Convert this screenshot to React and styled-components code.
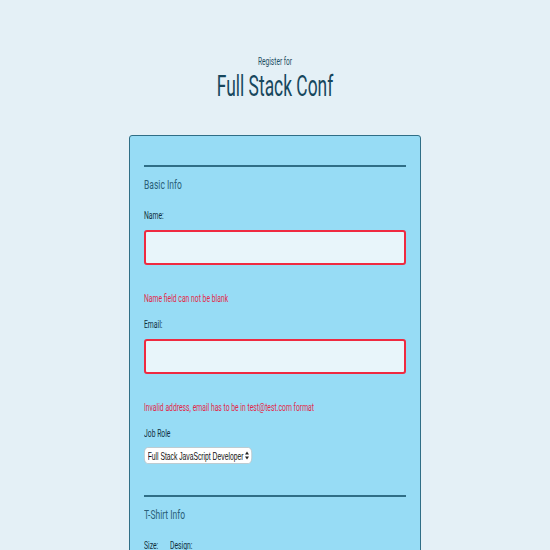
import React from "react";
import styled, { createGlobalStyle } from "styled-components";

const GlobalStyle = createGlobalStyle`
  body {
    margin: 0;
    background: #e4f0f6;
    font-family: "Roboto", "Liberation Sans", sans-serif;
    color: #184f68;
  }
`;

const Page = styled.div`
  display: flex;
  flex-direction: column;
  align-items: center;
  padding-top: 56px;
`;

const Header = styled.header`
  text-align: center;
  margin-bottom: 32px;
`;

const Kicker = styled.p`
  margin: 0;
  font-size: 10px;
  line-height: 12px;
  color: #1f4f63;
  transform: scaleX(0.66);
`;

const Title = styled.h1`
  margin: 1px 0 0;
  font-size: 29px;
  font-weight: 400;
  line-height: 34px;
  color: #17475d;
  transform: scaleX(0.6);
`;

const Card = styled.form`
  box-sizing: border-box;
  width: 292px;
  background: #97dcf5;
  border: 1px solid #2f6e86;
  border-radius: 3px;
  padding: 29px 14px 40px;
`;

const Fieldset = styled.fieldset`
  border: none;
  margin: 0;
  padding: 9px 0 0;
  border-top: 2px solid #2f6e86;
  & + & {
    margin-top: 31px;
  }
`;

const Legend = styled.h2`
  margin: 0 0 18px;
  font-size: 13.5px;
  line-height: 16px;
  font-weight: 400;
  color: #2a6078;
  transform: scaleX(0.63);
  transform-origin: left center;
`;

const Label = styled.label`
  display: block;
  font-size: 10px;
  line-height: 12px;
  color: #10303e;
  margin-bottom: 8px;
  transform: scaleX(0.68);
  transform-origin: left center;
`;

const Input = styled.input`
  display: block;
  box-sizing: border-box;
  width: 100%;
  height: 35px;
  background: #e8f5fa;
  border: 2px solid ${(p) => (p.$invalid ? "#ef2a40" : "#7cb8ce")};
  border-radius: 3px;
  outline: none;
`;

const Error = styled.p`
  margin: 28px 0 14px;
  font-size: 10px;
  line-height: 12px;
  color: #e3284a;
  transform: scaleX(0.68);
  transform-origin: left center;
`;

const SelectWrap = styled.div`
  position: relative;
  display: flex;
  width: 108px;
  height: 17px;
  margin-top: -1px;
`;

const Select = styled.select`
  appearance: none;
  -webkit-appearance: none;
  flex: none;
  box-sizing: border-box;
  font-family: "Liberation Sans", Arial, sans-serif;
  font-size: 11px;
  color: #111;
  background: #fff;
  border: 1px solid #b9c3c8;
  border-radius: 6px;
  height: 17px;
  width: 176px;
  padding: 0 12px 0 5px;
  transform: scaleX(0.614);
  transform-origin: left center;
`;

const Arrows = styled.svg`
  position: absolute;
  right: 3px;
  top: 4px;
  pointer-events: none;
`;

const Row = styled.div`
  display: flex;
  gap: 5px;
`;

export default function App() {
  return (
    <Page>
      <GlobalStyle />
      <Header>
        <Kicker>Register for</Kicker>
        <Title>Full Stack Conf</Title>
      </Header>
      <Card noValidate>
        <Fieldset>
          <Legend>Basic Info</Legend>
          <Label htmlFor="name">Name:</Label>
          <Input id="name" type="text" $invalid />
          <Error>Name field can not be blank</Error>
          <Label htmlFor="mail">Email:</Label>
          <Input id="mail" type="email" $invalid />
          <Error>Invalid address, email has to be in test@test.com format</Error>
          <Label htmlFor="title">Job Role</Label>
          <SelectWrap>
            <Select id="title" defaultValue="full-stack js developer">
              <option value="full-stack js developer">Full Stack JavaScript Developer</option>
              <option value="front-end developer">Front End Developer</option>
              <option value="back-end developer">Back End Developer</option>
              <option value="designer">Designer</option>
              <option value="student">Student</option>
              <option value="other">Other</option>
            </Select>
            <Arrows width="4" height="9" viewBox="0 0 4 9">
              <path d="M2 0.5 L4 3.5 H0 Z M2 8.5 L4 5.5 H0 Z" fill="#222" />
            </Arrows>
          </SelectWrap>
        </Fieldset>
        <Fieldset>
          <Legend>T-Shirt Info</Legend>
          <Row>
            <Label>Size:</Label>
            <Label>Design:</Label>
          </Row>
        </Fieldset>
      </Card>
    </Page>
  );
}
